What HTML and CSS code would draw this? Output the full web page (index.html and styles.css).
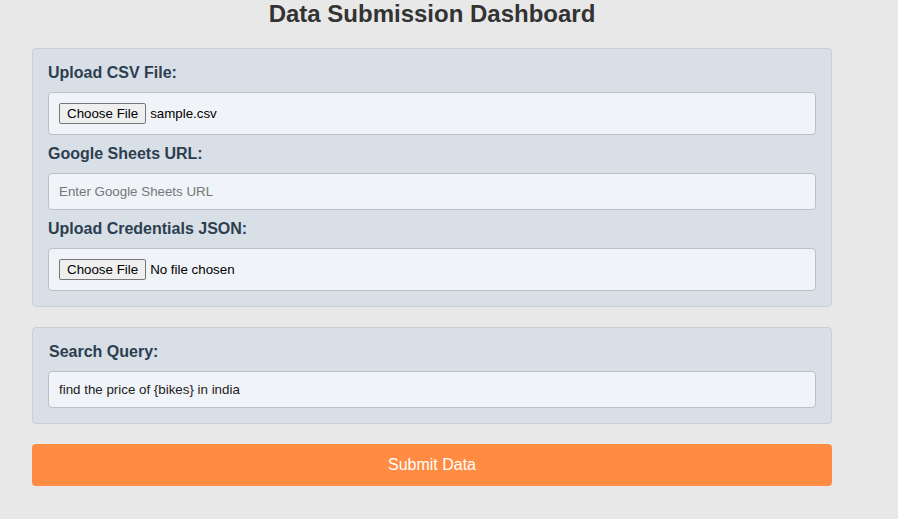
FILE: index.html
```html
<!DOCTYPE html>
<html lang="en">
<head>
<meta charset="utf-8">
<title>Data Submission Dashboard</title>
<link rel="stylesheet" href="styles.css">
</head>
<body>
<div class="page">
  <h1 class="title">Data Submission Dashboard</h1>
  <form class="form">
    <div class="card">
      <label class="label" for="csv">Upload CSV File:</label>
      <div class="file-box"><button type="button" class="file-btn">Choose File</button><span class="file-name">sample.csv</span></div>
      <label class="label" for="url">Google Sheets URL:</label>
      <input class="text-input" id="url" type="text" placeholder="Enter Google Sheets URL">
      <label class="label" for="cred">Upload Credentials JSON:</label>
      <div class="file-box last"><button type="button" class="file-btn">Choose File</button><span class="file-name">No file chosen</span></div>
    </div>
    <div class="card">
      <label class="label label-search" for="q">Search Query:</label>
      <input class="text-input last" id="q" type="text" value="find the price of {bikes} in india">
    </div>
    <button type="button" class="submit">Submit Data</button>
  </form>
</div>
</body>
</html>
```
FILE: styles.css
```css
* { box-sizing: border-box; }
html, body { margin: 0; padding: 0; }
body {
  background: #e8e8e8;
  font-family: "Liberation Sans", Arial, sans-serif;
  color: #333;
}
.page {
  width: 800px;
  margin-left: 32px;
}
.title {
  margin: 0 0 20px 0;
  height: 28px;
  line-height: 28px;
  font-size: 24px;
  font-weight: bold;
  text-align: center;
  color: #333;
}
.form {
  display: flex;
  flex-direction: column;
}
.card {
  background: #d9dfe6;
  border: 1px solid #cbcfd3;
  border-radius: 4px;
  padding: 15px;
  display: flex;
  flex-direction: column;
  margin-bottom: 20px;
}
.label {
  display: block;
  font-size: 16px;
  line-height: 18px;
  font-weight: bold;
  color: #2c3e50;
  margin-bottom: 10px;
}
.label-search { padding-left: 1px; }
.file-box {
  height: 43px;
  background: #f0f3f8;
  border: 1px solid #bcbfc3;
  border-radius: 4px;
  padding: 0 10px;
  display: flex;
  align-items: center;
  margin-bottom: 10px;
}
.file-btn {
  font-family: "Liberation Sans", Arial, sans-serif;
  font-size: 13.33px;
  color: #000;
  height: 21px;
  padding: 0 7px;
  background: #efefef;
  border: 1px solid #767676;
  border-radius: 2px;
  margin-right: 4px;
}
.file-name {
  font-size: 13.33px;
  color: #000;
}
.text-input {
  height: 37px;
  width: 100%;
  background: #f0f3f8;
  border: 1px solid #bcbfc3;
  border-radius: 4px;
  padding: 0 10px;
  font-family: "Liberation Sans", Arial, sans-serif;
  font-size: 13.33px;
  color: #222;
  margin-bottom: 10px;
  outline: none;
}
.text-input::placeholder { color: #777; }
.last { margin-bottom: 0; }
.submit {
  height: 42px;
  background: #ff8c42;
  border: none;
  border-radius: 4px;
  color: #fff;
  font-family: "Liberation Sans", Arial, sans-serif;
  font-size: 16px;
}
```
